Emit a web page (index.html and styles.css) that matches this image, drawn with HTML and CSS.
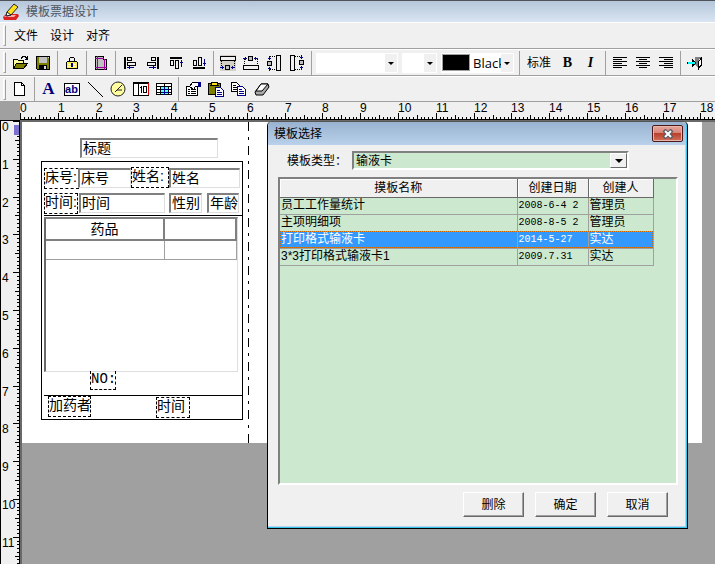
FILE: index.html
```html
<!DOCTYPE html>
<html lang="zh-CN">
<head>
  <meta charset="UTF-8">
  <meta name="viewport" content="width=device-width, initial-scale=1.0">
  <title>模板票据设计</title>
  <link rel="stylesheet" href="styles.css">
</head>
<body>
  <header class="titlebar">
    <svg class="app-icon" viewBox="0 0 18 18">
      <path d="M1 14l3-3h12l1 2-3 4H2z" fill="#d22"/>
      <path d="M2 14l3-2h9l-2 2z" fill="#faa"/>
      <path d="M5 9L12 1l4 3-7 8-4 1z" fill="#ffe11a" stroke="#222"/>
      <path d="M5 9l4 3-5 1z" fill="#fff" stroke="#222"/>
    </svg>
    <span>模板票据设计</span>
  </header>

  <nav class="bar menu">
    <button>文件</button>
    <button>设计</button>
    <button>对齐</button>
  </nav>

  <div class="bar">
    <button class="tool" title="打开"><svg viewBox="0 0 16 16"><path d="M1.5 13.500v-9h4l1 1h5v3" fill="#ffff9c" stroke="#000"/><path d="M1.500 13.500l3-5h11l-4 5z" fill="#808000" stroke="#000"/><path d="M9 3.500l2-2h2l2 2M15.500 1v3h-3" fill="none" stroke="#000"/></svg></button>
    <button class="tool" title="保存"><svg viewBox="0 0 16 16"><path d="M1.500 1.500h13v13h-12l-1-1z" fill="#808000" stroke="#000"/><path d="M4 2h8v6H4z" fill="#c0c0c0"/><path d="M4 10h8v4H4z" fill="#000"/><path d="M9 11h2v3H9zM13 2h1v1h-1z" fill="#ddd"/></svg></button>
    <i class="sep"></i>
    <button class="tool" title="锁定"><svg viewBox="0 0 16 16"><path d="M5.500 7V3.500l1-1h3l1 1V7" fill="none" stroke="#000"/><path d="M3.500 6.500h9l1 1v6h-11v-6z" fill="#ffef5a" stroke="#000"/><path d="M4 9h8M4 11h8" stroke="#fffbc0"/><path d="M7 8h2v4H7z" fill="#00008b"/></svg></button>
    <i class="sep"></i>
    <button class="tool" title="页面设置"><svg viewBox="0 0 16 16"><path d="M2.500 1.500h8l3 3v10h-11z" fill="#c0c0c0" stroke="#000"/><path d="M10.500 1.500v3h3" fill="#fff" stroke="#000"/><path d="M4.500 1v14M11.500 4v11M2 3.500h9M2 12.500h12" stroke="#909" fill="none"/></svg></button>
    <i class="sep"></i>
    <button class="tool" title="左对齐"><svg viewBox="0 0 16 16"><path d="M3 2v12" stroke="#000" stroke-width="2"/><path d="M5.500 2.500h4v3h-4zM5.500 7.500h8v3h-8z" fill="none" stroke="#000"/><path d="M5 12.500h7M7.500 11v3" stroke="#00008b"/></svg></button>
    <button class="tool" title="右对齐"><svg viewBox="0 0 16 16"><path d="M13 2v12" stroke="#000" stroke-width="2"/><path d="M6.500 2.500h4v3h-4zM2.500 7.500h8v3h-8z" fill="none" stroke="#000"/><path d="M4 12.500h7M8.500 11v3" stroke="#00008b"/></svg></button>
    <button class="tool" title="顶端对齐"><svg viewBox="0 0 16 16"><path d="M2 3h12" stroke="#000" stroke-width="2"/><path d="M2.500 5.500h3v5h-3zM7.500 5.500h3v8h-3z" fill="none" stroke="#000"/><path d="M13.500 5v7M12 7.500h3" stroke="#00008b"/></svg></button>
    <button class="tool" title="底端对齐"><svg viewBox="0 0 16 16"><path d="M2 13h12" stroke="#000" stroke-width="2"/><path d="M2.500 5.500h3v5h-3zM7.500 2.500h3v8h-3z" fill="none" stroke="#000"/><path d="M13.500 4v7M12 8.500h3" stroke="#00008b"/></svg></button>
    <i class="sep"></i>
    <button class="tool" title="贴到下边"><svg viewBox="0 0 16 16"><path d="M0 0h16v16H0z" fill="#d4d0c8"/><path d="M.5 1.500h15v4H.5z" fill="#f0f0f0" stroke="#000"/><path d="M1.500 6v6M14.500 6v6" stroke="#000" stroke-dasharray="1 1"/><path d="M5.500 10.500h4v4h-4z" fill="#c0c0c0" stroke="#000"/><path d="M0 12.500h4M2.500 11v3M11 12.500h4M12.500 11v3" stroke="#00008b"/></svg></button>
    <button class="tool" title="贴到上边"><svg viewBox="0 0 16 16"><path d="M.5 10.500h15v4H.5z" fill="#f0f0f0" stroke="#000"/><path d="M1.500 4v6M14.500 4v6" stroke="#000" stroke-dasharray="1 1"/><path d="M5.500 1.500h4v4h-4z" fill="#c0c0c0" stroke="#000"/><path d="M0 3.500h4M2.500 2v3M11 3.500h4M12.500 2v3" stroke="#00008b"/></svg></button>
    <button class="tool" title="贴到右边"><svg viewBox="0 0 16 16"><path d="M10.500.5h4v15h-4z" fill="#f0f0f0" stroke="#000"/><path d="M4 1.500h6M4 14.500h6" stroke="#000" stroke-dasharray="1 1"/><path d="M1.500 6.500h4v4h-4z" fill="#c0c0c0" stroke="#000"/><path d="M3.500 1v4M2 3.500h3M3.500 12v4M2 13.500h3" stroke="#00008b"/></svg></button>
    <button class="tool" title="贴到左边"><svg viewBox="0 0 16 16"><path d="M1.500.5h4v15h-4z" fill="#f0f0f0" stroke="#000"/><path d="M6 1.500h6M6 14.500h6" stroke="#000" stroke-dasharray="1 1"/><path d="M10.500 5.500h4v4h-4z" fill="#c0c0c0" stroke="#000"/><path d="M12.500 0v4M11 2.500h3M12.500 11v4M11 12.500h3" stroke="#00008b"/></svg></button>
    <i class="sep"></i>
    <span class="combo font"><select aria-label="字体"><option></option></select></span>
    <span class="combo size"><select aria-label="字号"><option></option></select></span>
    <span class="combo color"><i class="swatch"></i><select aria-label="颜色"><option>Black</option></select></span>
    <i class="sep"></i>
    <button class="tool text">标准</button>
    <button class="tool bold">B</button>
    <button class="tool italic">I</button>
    <i class="sep"></i>
    <button class="tool" title="文字左对齐"><svg viewBox="0 0 16 16"><path d="M1 2.500h14M1 4.500h9M1 6.500h14M1 8.500h9M1 10.500h14M1 12.500h9" stroke="#000"/></svg></button>
    <button class="tool" title="文字居中"><svg viewBox="0 0 16 16"><path d="M1 2.500h14M4 4.500h8M1 6.500h14M4 8.500h8M1 10.500h14M4 12.500h8" stroke="#000"/></svg></button>
    <button class="tool" title="文字右对齐"><svg viewBox="0 0 16 16"><path d="M1 2.500h14M6 4.500h9M1 6.500h14M6 8.500h9M1 10.500h14M6 12.500h9" stroke="#000"/></svg></button>
    <i class="sep"></i>
    <button class="tool" title="退出"><svg viewBox="0 0 16 16"><path d="M8.500 2.500h6v8" fill="none" stroke="#000"/><path d="M8 2h6l-3 5v6l-3-3z" fill="#808080"/><path d="M14.500 3l-3 4v7l3-5z" fill="#fff" stroke="#000"/><path d="M0 7h5V4l5 4-5 4V9H0z" fill="#000"/><path d="M1 8h7" stroke="#0ff" stroke-width="2"/></svg></button>
  </div>

  <div class="bar">
    <button class="tool" title="新建"><svg viewBox="0 0 16 16"><path d="M2.500 1.500h7l3 3v10h-10z" fill="#fff" stroke="#000"/><path d="M9.500 1.500v3h3" fill="none" stroke="#000"/></svg></button>
    <i class="sep"></i>
    <button class="tool letter" title="文本">A</button>
    <button class="tool" title="编辑框"><span class="ab">ab</span></button>
    <button class="tool" title="直线"><svg viewBox="0 0 16 16"><path d="M1 1l15 15" stroke="#000"/></svg></button>
    <button class="tool" title="时间"><svg class="smooth" viewBox="0 0 16 16"><circle cx="8" cy="8" r="7" fill="#ffffa0" stroke="#222"/><path d="M12 4L7 9h5M5 11l2-2" fill="none" stroke="#222"/></svg></button>
    <button class="tool" title="页码"><svg viewBox="0 0 16 16"><path d="M.5 1.500h15v13H.5z" fill="#fff" stroke="#000"/><path d="M0 2.500h16M5.500 2v12M8.500 5v7M7 6.500h2" stroke="#000"/><path d="M10.500 5.500h3v6h-3z" fill="none" stroke="#000"/><path d="M15.500 2v12" stroke="#d00"/></svg></button>
    <button class="tool" title="表格"><svg viewBox="0 0 16 16"><path d="M0 2h16v12H0z" fill="#fff"/><path d="M4 5h9v9H4z" fill="#6ff"/><path d="M.5 2.500h15v11H.5zM0 5.500h16M0 8.500h16M0 11.500h16M4.500 5v9M8.500 3v11M12.500 5v9" fill="none" stroke="#000"/><path d="M5 8.500h8M5 11.500h8M8.500 6v8" stroke="#00008b"/></svg></button>
    <i class="sep"></i>
    <button class="tool" title="属性"><svg viewBox="0 0 16 16"><path d="M1.500 5.500h11v9h-11z" fill="#fff" stroke="#000"/><path d="M3 8.500h2M3 10.500h2M3 12.500h2M6 8.500h5M6 10.500h5M6 12.500h5" stroke="#000"/><path d="M4.500 5.500l3-4h6v4h-3l-2 3z" fill="#fff" stroke="#000"/><path d="M13 1h3v5h-3z" fill="#00008b"/></svg></button>
    <button class="tool" title="粘贴"><svg viewBox="0 0 16 16"><path d="M.5 2.500h12v11H.5z" fill="#808000" stroke="#000"/><path d="M4 1h5l1 3H3z" fill="#ffe11a" stroke="#000"/><path d="M7.500 6.500h5l3 3v6h-8z" fill="#fff" stroke="#00008b"/><path d="M9 9.500h3M9 11.500h5M9 13.500h5" stroke="#00008b"/></svg></button>
    <button class="tool" title="复制"><svg viewBox="0 0 16 16"><path d="M.5 1.500h5l3 3v6h-8z" fill="#fff" stroke="#000"/><path d="M2 4.500h3M2 6.500h4M2 8.500h4" stroke="#000"/><path d="M6.500 5.500h5l3 3v6h-8z" fill="#fff" stroke="#00008b"/><path d="M8 8.500h3M8 10.500h5M8 12.500h5" stroke="#00008b"/></svg></button>
    <button class="tool" title="清除"><svg class="smooth" viewBox="0 0 16 16"><path d="M1 11l6-8h7l1 3-6 8H2z" fill="#aaa" stroke="#000"/><path d="M2 10l5-7h7l-6 7z" fill="#fff" stroke="#000"/></svg></button>
  </div>

  <main class="editor">
    <div class="corner"></div>
    <svg class="ruler-h" id="rulerH"></svg>
    <svg class="ruler-v" id="rulerV"></svg>
    <div class="workspace">
      <div class="paper">
        <div class="frame"></div>
        <div class="rule rule-top"></div>
        <div class="rule rule-bottom"></div>
        <svg class="margin-line"><line x1="1" y1="0" x2="1" y2="100%"/></svg>

        <input class="field f-title" aria-label="标题" value="标题" readonly>
        <label class="tag t-bed" for="bed">床号:</label>
        <input class="field f-bed" id="bed" value="床号" readonly>
        <label class="tag t-name" for="name">姓名:</label>
        <input class="field f-name" id="name" value="姓名" readonly>
        <label class="tag t-time" for="time">时间:</label>
        <input class="field f-time" id="time" value="时间" readonly>
        <input class="field f-sex" aria-label="性别" value="性别" readonly>
        <input class="field f-age" aria-label="年龄" value="年龄" readonly>

        <div class="drugs">
          <table>
            <thead><tr><th class="drug">药品</th><th></th></tr></thead>
            <tbody><tr><td></td><td></td></tr></tbody>
          </table>
        </div>

        <span class="tag t-no">NO:</span>
        <span class="tag t-by">加药者</span>
        <span class="tag t-at">时间</span>
      </div>
    </div>
  </main>

  <section class="dialog" role="dialog" aria-labelledby="dlgTitle">
    <div class="dialog-title">
      <span id="dlgTitle">模板选择</span>
      <button class="close" aria-label="关闭"><svg class="smooth" viewBox="0 0 12 10"><path d="M2 1l8 8M10 1L2 9" stroke="#555c66" stroke-width="4"/><path d="M3 2l6 6M9 2L3 8" stroke="#fff" stroke-width="2"/></svg></button>
    </div>
    <div class="dialog-body">
      <div class="type-row">
        <label for="type">模板类型：</label>
        <span class="type-combo"><select id="type"><option>输液卡</option></select></span>
      </div>
      <div class="list">
        <table>
          <thead>
            <tr><th class="col-name">摸板名称</th><th class="col-date">创建日期</th><th class="col-user">创建人</th></tr>
          </thead>
          <tbody>
            <tr><td>员工工作量统计</td><td class="date">2008-6-4 2</td><td>管理员</td></tr>
            <tr><td>主项明细项</td><td class="date">2008-8-5 2</td><td>管理员</td></tr>
            <tr class="selected"><td>打印格式输液卡</td><td class="date">2014-5-27</td><td>实达</td></tr>
            <tr><td>3*3打印格式输液卡1</td><td class="date">2009.7.31</td><td>实达</td></tr>
          </tbody>
        </table>
      </div>
      <div class="actions">
        <button>删除</button>
        <button>确定</button>
        <button>取消</button>
      </div>
    </div>
  </section>

  <script src="ruler.js"></script>
</body>
</html>
```
FILE: styles.css
```css
*, *::before, *::after {
  box-sizing: border-box;
}
body {
  margin: 0;
  height: 100vh;
  display: flex;
  flex-direction: column;
  overflow: hidden;
  background: #f0f0f0;
  color: #000;
  font: 12px/16px "Liberation Sans", "Noto Sans CJK SC", sans-serif;
}
button, input, select {
  font: inherit;
  color: inherit;
  margin: 0;
  padding: 0;
  border: none;
  background: none;
  outline: none;
}
svg {
  shape-rendering: crispEdges;
}
svg.smooth {
  shape-rendering: auto;
}

/* title and toolbars */
.titlebar {
  display: flex;
  align-items: center;
  gap: 6px;
  height: 22px;
  padding-left: 2px;
  border-top: 1px solid #50535a;
  background: linear-gradient(#b5c6da, #d9e5f2);
  color: #4c5662;
}
.app-icon {
  width: 18px;
  height: 18px;
  shape-rendering: auto;
}
.bar {
  display: flex;
  align-items: center;
  height: 27px;
  padding-left: 3px;
  border-top: 1px solid #fff;
  border-bottom: 1px solid #a0a0a0;
}
.bar::before {
  content: "";
  width: 3px;
  height: 21px;
  margin-right: 2px;
  border: 1px solid #a0a0a0;
  border-color: #fff #a0a0a0 #a0a0a0 #fff;
}
.bar + .bar + .bar {
  height: 26px;
}
.menu button {
  padding: 0 6px;
}
.tool {
  display: flex;
  align-items: center;
  justify-content: center;
  width: 23px;
  height: 22px;
  flex: none;
}
.tool svg {
  width: 16px;
  height: 16px;
}
.tool.text {
  width: 34px;
}
.tool.bold, .tool.italic, .tool.letter {
  font: bold 14px/16px "Liberation Serif", serif;
}
.tool.italic {
  font-style: italic;
}
.tool.letter {
  font-size: 17px;
  color: #00007b;
}
.ab {
  width: 16px;
  height: 13px;
  border: 1px solid #000;
  background: #fff;
  color: #00007b;
  font: bold 11px/10px "Liberation Sans", sans-serif;
}
.sep {
  width: 6px;
  height: 24px;
  flex: none;
  background: linear-gradient(#a0a0a0, #a0a0a0) 3px 0 / 1px 100% no-repeat;
}
.combo {
  position: relative;
  display: flex;
  align-items: center;
  height: 20px;
  margin: 0 2px;
  background: #fff;
  flex: none;
}
.combo::after {
  content: "";
  position: absolute;
  top: 1px;
  right: 1px;
  width: 12px;
  height: 18px;
  background: #f0f0f0;
  pointer-events: none;
}
.combo::before, .type-combo::before {
  content: "";
  position: absolute;
  z-index: 1;
  top: 9px;
  right: 4px;
  border: 3px solid transparent;
  border-top-color: #000;
  border-bottom: none;
  pointer-events: none;
}
.combo select, .type-combo select {
  appearance: none;
  flex: 1;
  min-width: 0;
  height: 100%;
}
.font {
  width: 82px;
}
.size {
  width: 35px;
}
.color {
  width: 73px;
  font-family: "Open Sans", sans-serif;
  font-size: 13px;
}
.swatch {
  width: 28px;
  height: 17px;
  margin: 0 3px 0 1px;
  background: #000;
  border: 1px solid #a0a0a0;
}

/* rulers and design surface */
.editor {
  flex: 1;
  min-height: 0;
  display: grid;
  grid-template: 18px 1fr / 20px 1fr;
}
.corner {
  background: #a0a0a0;
}
.ruler-h, .ruler-v {
  width: 100%;
  height: 100%;
  font-size: 12px;
  stroke: none;
}
.ruler-h {
  border-bottom: 1px solid #000;
}
.ruler-v {
  border: 1px solid #000;
  border-bottom: none;
}
.workspace {
  overflow: hidden;
  background: #a0a0a0;
  border: 2px solid #696969;
  border-width: 2px 0 0 2px;
}
.paper {
  position: relative;
  width: 680px;
  height: 321px;
  background: #fff;
  font: 14px/16px "Liberation Sans", "Noto Sans CJK SC", sans-serif;
}
/* items on the paper sit where the designer dropped them */
.frame, .rule, .margin-line, .field, .tag, .drugs {
  position: absolute;
}
.frame {
  left: 19px;
  top: 39px;
  width: 202px;
  height: 259px;
  border: 1px solid #000;
}
.rule {
  left: 22px;
  width: 198px;
  border-top: 1px solid #000;
}
.rule-top {
  top: 93px;
}
.rule-bottom {
  top: 273px;
}
.margin-line {
  left: 225px;
  top: 0;
  width: 3px;
  height: 100%;
  stroke: #000;
  stroke-dasharray: 9 6 3 6;
}
.field {
  height: 20px;
  padding: 0 0 3px 1px;
  border: 1px solid #dedede;
  border-top: 2px solid #808080;
  border-left: 2px solid #808080;
}
.tag {
  height: 21px;
  border: 1px dashed #000;
  white-space: nowrap;
  overflow: hidden;
}
.f-title { left: 58px; top: 16px; width: 138px; }
.t-bed { left: 22px; top: 46px; width: 35px; }
.f-bed { left: 56px; top: 46px; width: 53px; }
.t-name { left: 109px; top: 45px; width: 38px; }
.f-name { left: 147px; top: 46px; width: 71px; }
.t-time { left: 22px; top: 71px; width: 34px; }
.f-time { left: 57px; top: 71px; width: 86px; }
.f-sex { left: 147px; top: 71px; width: 33px; }
.f-age { left: 185px; top: 71px; width: 32px; }
.t-no { left: 68px; top: 249px; width: 26px; }
.t-by { left: 26px; top: 274px; width: 43px; }
.t-at { left: 134px; top: 275px; width: 34px; }
.t-no {
  height: 19px;
  border-top: none;
  font-family: "Liberation Mono", monospace;
}
.drugs {
  left: 22px;
  top: 95px;
  width: 194px;
  height: 155px;
  border: 1px solid #dedede;
  border-top: 2px solid #808080;
  border-left: 2px solid #696969;
}
table {
  border-collapse: collapse;
  table-layout: fixed;
}
th, td {
  font-weight: normal;
  padding: 0;
}
.drugs table {
  width: 100%;
}
.drugs th {
  height: 21px;
  border: 2px solid #808080;
  border-top: none;
  border-left: none;
}
.drugs td {
  height: 19px;
  border: 1px solid #a0a0a0;
  border-left: none;
}
.drugs .drug {
  width: 118px;
}

/* template dialog */
.dialog {
  position: absolute;
  left: 267px;
  top: 121px;
  width: 421px;
  border: 1px solid #000;
  border-top-color: #555;
  border-radius: 5px 5px 0 0;
  background: #f0f0f0;
  box-shadow: inset -1px -1px #35c5ec, inset -2px -2px #b9d1ea;
}
.dialog-title {
  display: flex;
  align-items: center;
  justify-content: space-between;
  height: 23px;
  margin-right: 1px;
  padding: 0 3px 0 6px;
  border-radius: 4px 4px 0 0;
  background: linear-gradient(#98b2d0, #b9d1ea);
}
.close {
  display: flex;
  align-items: center;
  justify-content: center;
  width: 31px;
  height: 17px;
  border: 1px solid #4c1a1c;
  border-radius: 2px;
  background: linear-gradient(#e6a79c, #d98477 45%, #b8402c 50%, #d1705a);
  box-shadow: inset 0 0 0 1px #e9b5ac;
}
.close svg {
  width: 12px;
  height: 10px;
}
.dialog-body {
  padding: 6px 9px 11px 10px;
}
.type-row {
  display: flex;
  align-items: center;
  gap: 5px;
  padding: 0 49px 0 9px;
  margin-bottom: 7px;
}
.type-row label {
  width: 60px;
  white-space: nowrap;
}
.type-combo {
  position: relative;
  flex: 1;
  display: flex;
  height: 19px;
  border: 2px solid #fff;
  border-top-color: #808080;
  border-left-color: #808080;
  background: #cce8cf;
}
.type-combo select {
  padding-left: 2px;
}
.type-combo::before {
  top: 6px;
  right: 4px;
  border-width: 4px 4px 0;
}
.type-combo::after {
  content: "";
  position: absolute;
  top: 0;
  right: 0;
  width: 17px;
  height: 15px;
  border: 1px solid #fff;
  border-right-color: #696969;
  border-bottom-color: #696969;
  background: #f0f0f0;
  pointer-events: none;
}
.list {
  height: 308px;
  border: 2px solid #fff;
  border-top-color: #808080;
  border-left-color: #808080;
  background: #cce8cf;
}
.list th {
  height: 18px;
  border: 1px solid #696969;
  border-top: none;
  border-left: none;
  background: #f0f0f0;
  box-shadow: inset 1px 1px #fff;
}
.list td {
  height: 17px;
  padding-left: 1px;
  border: 1px solid #a0a0a0;
  border-left: none;
  line-height: 15px;
  white-space: nowrap;
}
.list .date {
  font-family: "Liberation Mono", monospace;
  font-size: 10px;
}
.col-name {
  width: 237px;
}
.col-date {
  width: 71px;
}
.col-user {
  width: 65px;
}
.selected {
  background: #3399ff;
  color: #fff;
  outline: 1px dotted #cc6600;
  outline-offset: -1px;
}
.actions {
  display: flex;
  justify-content: flex-end;
  gap: 11px;
  padding: 7px 10px 0 0;
}
.actions button {
  width: 61px;
  height: 25px;
  border: 1px solid #fff;
  border-right-color: #696969;
  border-bottom-color: #696969;
  box-shadow: inset -1px -1px #a0a0a0;
}
```
FILE: ruler.js
```js
const CM = 37.8;
const NS = 'http://www.w3.org/2000/svg';

function add(svg, name, attrs, text) {
  const el = document.createElementNS(NS, name);
  for (const key in attrs) el.setAttribute(key, attrs[key]);
  if (text !== undefined) el.textContent = text;
  svg.appendChild(el);
}

function drawRuler(svg, vertical) {
  const size = vertical ? svg.clientHeight : svg.clientWidth;
  for (let i = 0; i * CM / 10 < size; i++) {
    const pos = Math.round(i * CM / 10);
    const len = i % 10 === 0 ? 6 : i % 5 === 0 ? 4 : 2;
    if (vertical) {
      add(svg, 'rect', { x: 18 - len, y: pos, width: len, height: 1 });
    } else {
      add(svg, 'rect', { x: pos, y: 17 - len, width: 1, height: len });
    }
    if (i % 10 === 0) {
      const at = vertical ? { x: 1, y: pos + 10 } : { x: pos, y: 10 };
      add(svg, 'text', at, i / 10);
    }
  }
  // current position marker
  if (vertical) {
    add(svg, 'rect', { x: 13, y: 4, width: 5, height: 10, fill: '#7b72d0' });
  }
}

drawRuler(document.getElementById('rulerH'), false);
drawRuler(document.getElementById('rulerV'), true);
```
